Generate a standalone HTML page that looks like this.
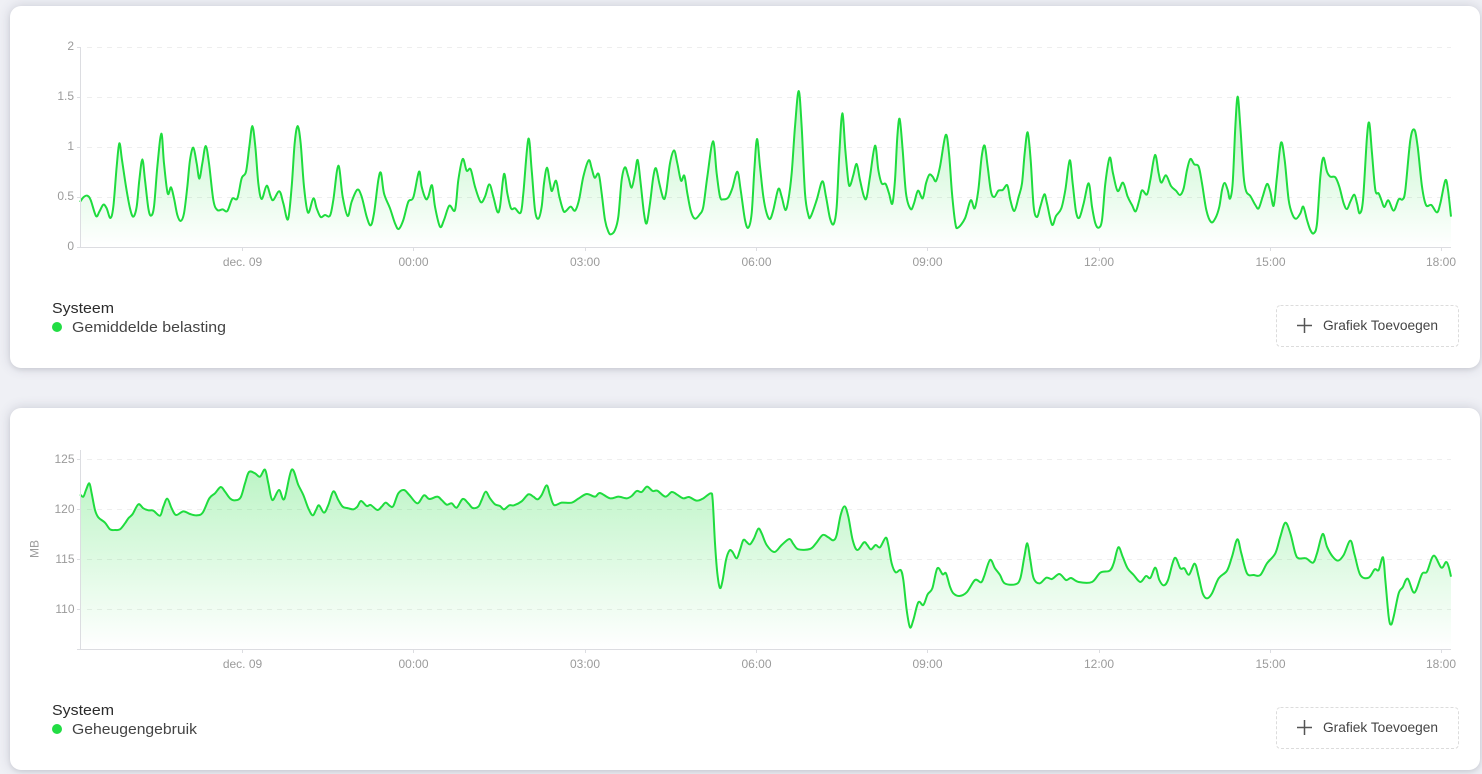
<!DOCTYPE html>
<html lang="nl"><head><meta charset="utf-8"><title>Systeem</title>
<style>
html,body{margin:0;padding:0;width:1482px;height:774px;overflow:hidden;background:#eff0f5}
.card{position:absolute;left:10px;width:1470px;height:362px;background:#fff;border-radius:11px;box-shadow:0 0 12px rgba(60,65,95,.2),0 2px 4px rgba(0,0,0,.07)}
svg{position:absolute;left:0;top:0}
text{font-family:"Liberation Sans",sans-serif}
.a{font-size:12px;fill:#9b9b9b}
.t{font-size:15px;fill:#2b2b2b}
.l{font-size:15px;fill:#444}
.b{font-size:14px;fill:#444}
.g{stroke:#eeeeee;stroke-width:1;stroke-dasharray:5 5;fill:none}
.x{stroke:#dcdde1;stroke-width:1;fill:none}
</style></head><body>
<div class="card" style="top:6px"></div>
<div class="card" style="top:408px"></div>
<svg width="1482" height="774" viewBox="0 0 1482 774" xmlns="http://www.w3.org/2000/svg">
<defs>
<linearGradient id="g1" gradientUnits="userSpaceOnUse" x1="0" y1="90" x2="0" y2="247"><stop offset="0" stop-color="#1fdc3e" stop-opacity=".3"/><stop offset="1" stop-color="#1fdc3e" stop-opacity="0"/></linearGradient>
<linearGradient id="g2" gradientUnits="userSpaceOnUse" x1="0" y1="468" x2="0" y2="649"><stop offset="0" stop-color="#1fdc3e" stop-opacity=".3"/><stop offset="1" stop-color="#1fdc3e" stop-opacity="0"/></linearGradient>
</defs>
<path class="g" d="M87 47.5H1451M87 97.5H1451M87 147.5H1451M87 197.5H1451"/>
<path class="g" d="M87 459.5H1451M87 509.5H1451M87 559.5H1451M87 609.5H1451"/>
<path id="f1" fill="url(#g1)"/><path id="s1" fill="none" stroke="#1fdc3e" stroke-width="2" stroke-linejoin="round"/>
<path id="f2" fill="url(#g2)"/><path id="s2" fill="none" stroke="#1fdc3e" stroke-width="2" stroke-linejoin="round"/>
<path class="x" d="M80.5 47V247.5M77 47.5H80.5M77 97.5H80.5M77 147.5H80.5M77 197.5H80.5M77 247.5H1451M242.5 247V251M413.5 247V251M585.5 247V251M756.5 247V251M927.5 247V251M1099.5 247V251M1270.5 247V251M1441.5 247V251"/>
<path class="x" d="M80.5 450V649.5M77 459.5H80.5M77 509.5H80.5M77 559.5H80.5M77 609.5H80.5M77 649.5H1451M242.5 649V653M413.5 649V653M585.5 649V653M756.5 649V653M927.5 649V653M1099.5 649V653M1270.5 649V653M1441.5 649V653"/>
<g class="a" text-anchor="end">
<text x="74" y="50">2</text><text x="74" y="100">1.5</text><text x="74" y="150">1</text><text x="74" y="200">0.5</text><text x="74" y="250">0</text>
<text x="74.5" y="463">125</text><text x="74.5" y="513">120</text><text x="74.5" y="563">115</text><text x="74.5" y="613">110</text>
</g>
<g class="a" text-anchor="middle">
<text x="242.5" y="266">dec. 09</text><text x="413.5" y="266">00:00</text><text x="585" y="266">03:00</text><text x="756.5" y="266">06:00</text><text x="927.5" y="266">09:00</text><text x="1099" y="266">12:00</text><text x="1270.5" y="266">15:00</text><text x="1441" y="266">18:00</text>
<text x="242.5" y="668">dec. 09</text><text x="413.5" y="668">00:00</text><text x="585" y="668">03:00</text><text x="756.5" y="668">06:00</text><text x="927.5" y="668">09:00</text><text x="1099" y="668">12:00</text><text x="1270.5" y="668">15:00</text><text x="1441" y="668">18:00</text>
<text transform="translate(38.5 549) rotate(-90)">MB</text>
</g>
<text class="t" x="52" y="313" textLength="62" lengthAdjust="spacingAndGlyphs">Systeem</text>
<circle cx="57" cy="327" r="5" fill="#22dd44"/>
<text class="l" x="72" y="332" textLength="154" lengthAdjust="spacingAndGlyphs">Gemiddelde belasting</text>
<text class="t" x="52" y="715" textLength="62" lengthAdjust="spacingAndGlyphs">Systeem</text>
<circle cx="57" cy="729" r="5" fill="#22dd44"/>
<text class="l" x="72" y="734" textLength="125" lengthAdjust="spacingAndGlyphs">Geheugengebruik</text>
<rect x="1276.5" y="305.5" width="182" height="41" rx="4" fill="#fff" stroke="#dcdcdc" stroke-dasharray="3 2"/>
<path d="M1297 325.5H1312M1304.5 318V333" stroke="#555" stroke-width="1.5" fill="none"/>
<text class="b" x="1323" y="330" textLength="115" lengthAdjust="spacingAndGlyphs">Grafiek Toevoegen</text>
<rect x="1276.5" y="707.5" width="182" height="41" rx="4" fill="#fff" stroke="#dcdcdc" stroke-dasharray="3 2"/>
<path d="M1297 727.5H1312M1304.5 720V735" stroke="#555" stroke-width="1.5" fill="none"/>
<text class="b" x="1323" y="732" textLength="115" lengthAdjust="spacingAndGlyphs">Grafiek Toevoegen</text>
</svg>
<script>
var A=[[0,0,"240,606 250,592 262,587 272,600 288,648 298,635 310,614 320,625 331,654 340,620 350,500 358,430 366,480 378,560 390,625 400,650 410,620 418,540 427,478 435,540 445,625 453,647 462,620 472,500 484,401 492,490 503,580 513,562 522,595 532,645 542,663 552,640 562,560 570,480 580,443 590,490 598,536 607,490 617,438 627,490 640,600 652,630 668,628 682,633 697,596 712,595 725,535 738,515 748,440 757,378 766,440 775,550 785,597 800,557 812,590 820,600 838,574 850,610 864,658 875,560 884,430 893,378 902,430 912,560 924,638 940,595 950,625 962,651 975,645 990,647 1000,600 1015,497 1028,590 1043,648 1055,605 1072,569 1085,590 1100,650 1112,676 1122,640 1135,540 1143,519 1152,580 1170,625 1185,670 1196,687 1210,660 1225,605 1240,592 1257,515 1265,560 1277,596 1285,590 1296,556 1305,620 1320,680 1332,660 1348,617 1365,630 1375,540 1388,477 1400,512 1412,508 1425,560 1442,606 1455,590 1468,553 1480,590 1492,635"],
[500,60,"0,440 12,342 22,400 33,445 45,445 62,458 70,400 85,237 95,330 105,450 115,476 125,440 132,370 141,323 150,370 156,393 168,362 178,410 190,452 198,453 212,440 225,452 237,420 250,350 266,301 275,325 284,353 296,342 305,400 315,480 325,515 333,523 345,510 355,470 365,360 375,322 385,350 395,383 405,340 413,300 422,370 432,460 440,490 450,430 460,350 468,325 478,370 490,415 498,400 510,310 522,271 532,310 543,362 553,347 562,400 573,455 585,476 600,462 610,440 622,350 639,244 650,340 660,410 670,418 685,412 697,385 712,335 722,390 735,480 745,503 755,460 763,330 771,237 780,320 790,410 800,460 810,477 820,450 835,387 845,410 856,450 865,420 875,340 885,200 896,93 905,200 915,400 925,465 932,470 950,420 967,364 978,410 990,475 1001,492 1010,440 1018,280 1027,160 1036,270 1045,365 1051,375 1060,345 1070,312 1080,360 1092,410 1100,412 1110,350 1125,257 1135,330 1145,370 1157,372 1167,400 1177,431 1185,360 1192,230 1199,177 1208,270 1218,400 1232,447 1242,430 1254,392 1268,415 1278,370 1288,344 1298,350 1308,363 1320,320 1337,225 1347,280 1356,400 1366,490 1374,503 1395,475 1412,421 1424,445 1435,390 1445,290 1454,257 1463,320 1473,395 1483,411 1495,392"],
[982,60,"62,390 76,376 85,420 97,453 110,410 120,370 128,280 137,217 146,300 155,440 165,471 175,440 187,403 195,430 210,494 222,468 238,445 250,390 263,301 272,370 282,455 292,473 305,430 320,370 330,440 340,490 350,503 360,480 370,370 383,293 393,340 407,393 423,368 437,410 450,435 461,454 472,420 480,391 495,403 505,360 519,285 530,340 538,368 552,346 567,378 582,392 594,405 605,385 615,330 625,297 637,313 650,320 660,370 673,450 687,486 700,475 712,440 720,390 728,369 737,390 744,416 752,370 760,200 767,110 775,200 785,350 793,395 805,408 820,435 830,445 842,410 855,372 865,395 875,437 885,350 897,248 908,300 920,420 932,465 943,476 955,460 964,440 975,480 985,510 995,520 1005,490 1015,350 1024,293 1035,335 1045,350 1060,352 1072,380 1085,430 1095,447 1105,425 1117,404 1125,430 1133,460 1143,420 1155,230 1162,190 1170,280 1180,390 1190,400 1198,420 1207,441 1219,421 1235,452 1250,418 1262,418 1270,390 1285,240 1297,209 1307,260 1320,380 1332,435 1348,435 1365,457 1375,430 1390,361 1398,390 1407,470"]];
var B=[[0,440,"240,163 250,170 258,150 268,130 275,160 285,210 295,232 315,248 330,268 345,270 360,268 375,250 385,235 398,222 415,193 430,205 445,211 460,212 480,227 490,200 502,176 515,205 528,225 550,214 570,222 590,226 608,218 628,175 645,160 662,141 675,155 690,175 705,181 722,172 735,130 747,96 765,100 780,110 795,89 805,130 817,180 837,150 853,177 875,89 895,135 910,165 925,205 938,226 948,210 957,196 972,218 985,195 1000,154 1015,180 1028,200 1045,205 1060,208 1072,200 1083,183 1100,198 1112,195 1132,210 1145,200 1157,188 1170,198 1180,198 1195,160 1212,150 1228,165 1252,190 1272,166 1288,177 1312,170 1325,180 1340,194 1355,190 1370,203 1388,177 1405,190 1418,204 1435,200 1445,180 1457,155 1470,175 1485,193"],
[500,460,"0,138 12,148 28,136 42,136 65,124 85,103 100,110 113,118 125,105 140,76 150,105 162,135 185,128 215,128 235,116 260,102 285,110 300,99 330,115 355,110 380,115 395,108 410,93 425,96 441,80 458,93 472,92 496,110 515,96 530,103 550,115 567,111 590,122 610,115 632,100 638,120 645,250 652,340 660,384 668,360 678,300 688,272 697,275 710,295 720,270 730,240 740,246 750,253 762,235 775,206 785,220 800,255 823,276 845,255 868,237 880,252 895,268 930,267 948,250 968,225 985,232 1000,241 1010,225 1022,165 1034,139 1045,170 1058,240 1072,270 1092,247 1102,255 1113,268 1127,255 1140,262 1157,233 1165,255 1175,310 1187,337 1202,330 1210,360 1220,450 1230,502 1240,480 1255,427 1270,435 1283,403 1297,385 1312,325 1328,343 1338,340 1350,380 1360,400 1378,408 1400,397 1425,360 1443,367 1452,350 1470,300 1485,325"],
[982,500,"54,225 68,250 100,253 115,235 127,170 136,130 145,180 155,235 173,250 193,233 210,237 232,222 252,240 267,234 290,246 330,246 355,218 383,212 395,190 409,142 422,170 437,205 455,225 475,246 492,228 505,234 520,203 532,240 545,256 558,240 578,174 595,205 607,205 621,224 638,191 650,230 662,280 675,295 690,280 710,235 735,212 750,170 766,118 778,160 795,220 815,225 835,225 855,190 880,160 895,110 910,68 925,100 940,160 950,175 972,175 993,188 1005,160 1022,102 1035,140 1052,170 1068,182 1085,165 1105,122 1118,165 1135,225 1160,233 1178,208 1190,210 1203,172 1210,240 1220,350 1227,374 1235,350 1250,280 1262,262 1277,236 1297,278 1320,222 1335,215 1355,167 1378,203 1392,186 1400,200 1407,230"]];
function build(S,base,fid,sid){var P=[];S.forEach(function(s){s[2].split(" ").forEach(function(t){var c=t.split(",");P.push([s[0]+c[0]/3,s[1]+c[1]/3])})});
var d="M"+P[0][0].toFixed(2)+" "+P[0][1].toFixed(2);
for(var i=0;i<P.length-1;i++){var a=P[Math.max(i-1,0)],b=P[i],c=P[i+1],e=P[Math.min(i+2,P.length-1)];
d+="C"+(b[0]+(c[0]-a[0])/6).toFixed(2)+" "+(b[1]+(c[1]-a[1])/6).toFixed(2)+" "+(c[0]-(e[0]-b[0])/6).toFixed(2)+" "+(c[1]-(e[1]-b[1])/6).toFixed(2)+" "+c[0].toFixed(2)+" "+c[1].toFixed(2)}
document.getElementById(sid).setAttribute("d",d);
document.getElementById(fid).setAttribute("d",d+"L"+P[P.length-1][0].toFixed(2)+" "+base+"L"+P[0][0].toFixed(2)+" "+base+"Z")}
build(A,247,"f1","s1");build(B,649,"f2","s2");
</script>
</body></html>
